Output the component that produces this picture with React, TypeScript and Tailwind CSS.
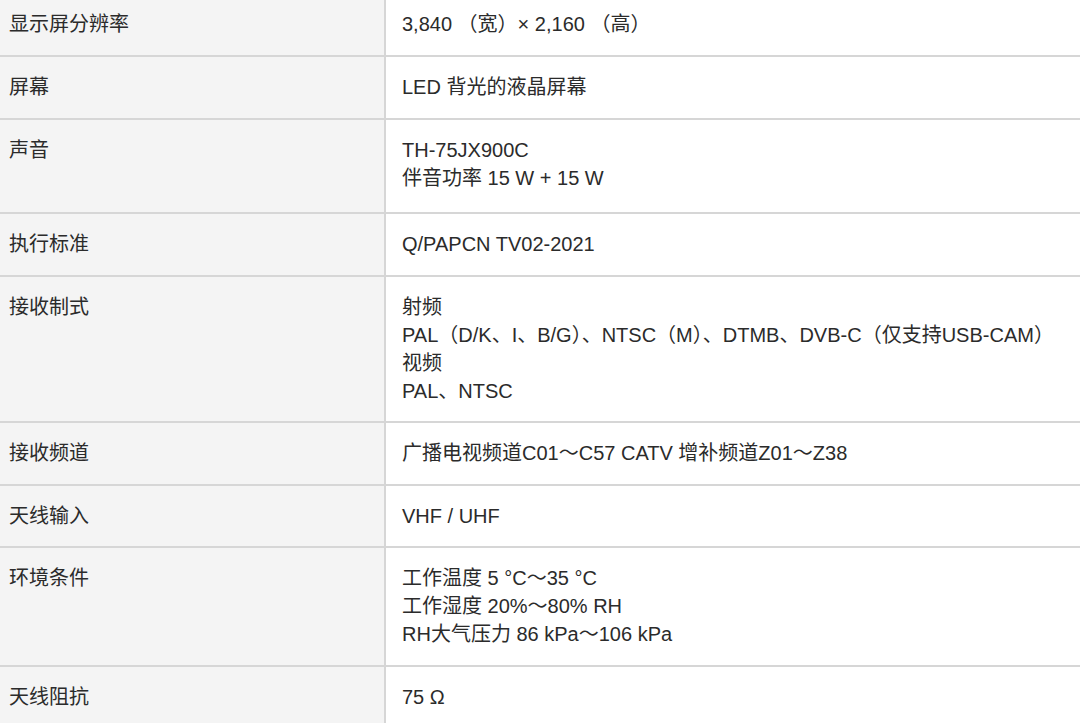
const rows: { label: string; lines: string[]; pb: string }[] = [
  { label: "显示屏分辨率", lines: ["3,840 （宽）× 2,160 （高）"], pb: "pb-[17px]" },
  { label: "屏幕", lines: ["LED 背光的液晶屏幕"], pb: "pb-[17px]" },
  { label: "声音", lines: ["TH-75JX900C", "伴音功率 15 W + 15 W"], pb: "pb-[20px]" },
  { label: "执行标准", lines: ["Q/PAPCN TV02-2021"], pb: "pb-[17px]" },
  {
    label: "接收制式",
    lines: [
      "射频",
      "PAL（D/K、I、B/G）、NTSC（M）、DTMB、DVB-C（仅支持USB-CAM）",
      "视频",
      "PAL、NTSC",
    ],
    pb: "pb-[16px]",
  },
  { label: "接收频道", lines: ["广播电视频道C01～C57 CATV 增补频道Z01～Z38"], pb: "pb-[17px]" },
  { label: "天线输入", lines: ["VHF / UHF"], pb: "pb-[16px]" },
  {
    label: "环境条件",
    lines: ["工作温度 5 °C～35 °C", "工作湿度 20%～80% RH", "RH大气压力 86 kPa～106 kPa"],
    pb: "pb-[17px]",
  },
  { label: "天线阻抗", lines: ["75 Ω"], pb: "pb-[17px]" },
];

export default function App() {
  return (
    <div className="h-[723px] w-[1080px] overflow-hidden bg-white">
      <div
        className="-mt-[6px] flex flex-col text-[20px] leading-[28px] text-[#2b2b2b]"
        style={{ fontFamily: '"Liberation Sans", "Noto Sans CJK SC", sans-serif' }}
      >
        {rows.map((row, i) => (
          <div
            key={row.label}
            className={`flex ${i < rows.length - 1 ? "border-b-2 border-[#d6d6d6]" : ""}`}
          >
            <div className="w-[386px] shrink-0 bg-[#f4f4f4] px-[9px] pt-[16px] border-r-2 border-[#d6d6d6]">
              {row.label}
            </div>
            <div className={`flex-1 pl-[16px] pt-[16px] whitespace-nowrap ${row.pb}`}>
              {row.lines.map((line) => (
                <div key={line}>{line}</div>
              ))}
            </div>
          </div>
        ))}
      </div>
    </div>
  );
}
